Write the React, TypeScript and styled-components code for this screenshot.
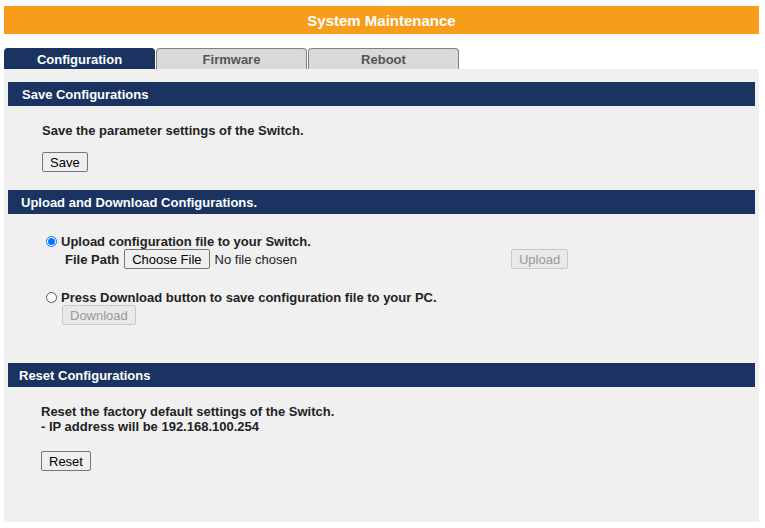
import styled, { createGlobalStyle } from "styled-components";

const Global = createGlobalStyle`
  body {
    margin: 0;
    padding: 6px 6px 0 4px;
    background: #ffffff;
    font-family: "Liberation Sans", Arial, sans-serif;
    font-size: 13px;
    color: #222;
  }
`;

const TitleBar = styled.div`
  height: 28px;
  background: #f89c1c;
  color: #fff;
  font-weight: bold;
  font-size: 15px;
  display: flex;
  align-items: center;
  justify-content: center;
`;

const Tabs = styled.div`
  display: flex;
  gap: 1px;
  margin-top: 14px;
  height: 21px;
`;

const Tab = styled.div<{ $active?: boolean }>`
  width: 151px;
  box-sizing: border-box;
  border: 1px solid ${(p) => (p.$active ? "#1b3360" : "#808080")};
  border-bottom: none;
  border-radius: 4px 4px 0 0;
  background: ${(p) => (p.$active ? "#1b3360" : "#d9d9d9")};
  color: ${(p) => (p.$active ? "#fff" : "#555")};
  font-weight: bold;
  display: flex;
  align-items: center;
  justify-content: center;
`;

const Panel = styled.div`
  background: #f0f0f0;
  height: 453px;
  padding: 13px 4px 0;
  box-sizing: border-box;
`;

const SectionHead = styled.div<{ $pad: number }>`
  height: 24px;
  background: #1b3360;
  color: #fff;
  font-weight: bold;
  display: flex;
  align-items: center;
  padding-left: ${(p) => p.$pad}px;
`;

const Body = styled.div<{ $pad: number; $h: number }>`
  padding-left: ${(p) => p.$pad}px;
  height: ${(p) => p.$h}px;
  box-sizing: border-box;
  font-weight: bold;
`;

const Btn = styled.button<{ $disabled?: boolean }>`
  font-family: "Liberation Sans", Arial, sans-serif;
  font-size: 13px;
  height: 20px;
  padding: 0 7px;
  border: 1px solid ${(p) => (p.$disabled ? "#c8c8c8" : "#767676")};
  border-radius: 2px;
  background: ${(p) => (p.$disabled ? "#e9e9e9" : "#efefef")};
  color: ${(p) => (p.$disabled ? "#999" : "#000")};
`;

const Row = styled.div`
  display: flex;
  align-items: center;
  gap: 4px;
`;

const Radio = styled.span<{ $on?: boolean }>`
  width: 11px;
  height: 11px;
  border-radius: 50%;
  box-sizing: border-box;
  border: ${(p) => (p.$on ? "1px solid #0075ff" : "1px solid #555")};
  background: #fff;
  display: inline-flex;
  align-items: center;
  justify-content: center;
  &::after {
    content: "";
    width: 7px;
    height: 7px;
    border-radius: 50%;
    background: ${(p) => (p.$on ? "#0075ff" : "transparent")};
  }
`;

const Normal = styled.span`
  font-weight: normal;
`;

export default function App() {
  return (
    <>
      <Global />
      <TitleBar>System Maintenance</TitleBar>
      <Tabs>
        <Tab $active>Configuration</Tab>
        <Tab>Firmware</Tab>
        <Tab>Reboot</Tab>
      </Tabs>
      <Panel>
        <SectionHead $pad={14}>Save Configurations</SectionHead>
        <Body $pad={34} $h={84}>
          <div style={{ paddingTop: 17 }}>Save the parameter settings of the Switch.</div>
          <div style={{ marginTop: 14 }}><Btn>Save</Btn></div>
        </Body>
        <SectionHead $pad={13}>Upload and Download Configurations.</SectionHead>
        <Body $pad={38} $h={149}>
          <Row style={{ paddingTop: 20 }}>
            <Radio $on />
            Upload configuration file to your Switch.
          </Row>
          <Row style={{ paddingLeft: 19, height: 20, gap: 5 }}>
            File Path
            <Btn>Choose File</Btn>
            <Normal>No file chosen</Normal>
            <Btn $disabled style={{ marginLeft: 209 }}>Upload</Btn>
          </Row>
          <Row style={{ paddingTop: 21 }}>
            <Radio />
            Press Download button to save configuration file to your PC.
          </Row>
          <div style={{ paddingLeft: 16 }}>
            <Btn $disabled>Download</Btn>
          </div>
        </Body>
        <SectionHead $pad={11}>Reset Configurations</SectionHead>
        <Body $pad={33} $h={100}>
          <div style={{ paddingTop: 17, lineHeight: "15px" }}>
            Reset the factory default settings of the Switch.<br />- IP address will be 192.168.100.254
          </div>
          <div style={{ marginTop: 17 }}><Btn>Reset</Btn></div>
        </Body>
      </Panel>
    </>
  );
}
